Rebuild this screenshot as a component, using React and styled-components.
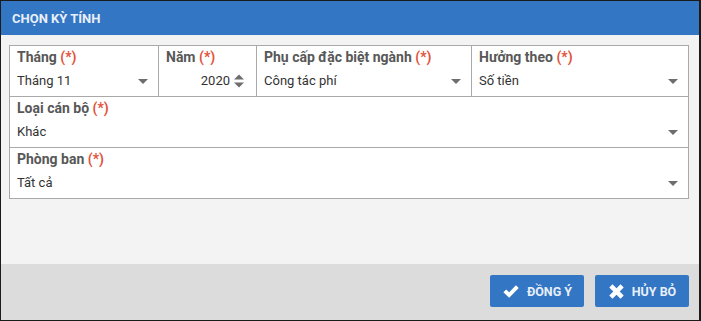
import React from 'react';
import styled, { createGlobalStyle } from 'styled-components';

const GlobalStyle = createGlobalStyle`
  html, body {
    margin: 0;
    padding: 0;
    background: #fff;
  }
  * {
    box-sizing: border-box;
  }
`;

const FIELDS_TOP = [
  { label: 'Tháng', value: 'Tháng 11', width: 149, kind: 'select' },
  { label: 'Năm', value: '2020', width: 98, kind: 'number' },
  { label: 'Phụ cấp đặc biệt ngành', value: 'Công tác phí', width: 215, kind: 'select' },
  { label: 'Hưởng theo', value: 'Số tiền', width: 0, kind: 'select' },
];

const Caret = () => (
  <CaretIcon viewBox="0 0 10 5" width="10" height="5">
    <path d="M0 0 H10 L5 5 Z" fill="#6e6e6e" />
  </CaretIcon>
);

const Spinner = () => (
  <svg viewBox="0 0 10 14" width="10" height="14">
    <path d="M0 5.5 L5 0.5 L10 5.5 Z" fill="#6e6e6e" />
    <path d="M0 8.5 H10 L5 13.5 Z" fill="#6e6e6e" />
  </svg>
);

const Field = ({ label, value, kind, width }) => (
  <Cell $width={width}>
    <Label>
      {label} <Req>(*)</Req>
    </Label>
    <Value $right={kind === 'number'}>
      <span>{value}</span>
      {kind === 'number' ? <Spinner /> : <Caret />}
    </Value>
  </Cell>
);

const CheckIcon = () => (
  <svg viewBox="0 0 16 16" width="18" height="17">
    <path d="M0.8 8.6 L3.5 6 L6.3 8.7 L12.6 2.2 L15.3 4.8 L6.3 13.8 Z" fill="#fff" />
  </svg>
);

const CrossIcon = () => (
  <svg viewBox="0 0 16 16" width="17" height="17">
    <path
      d="M1.2 4.2 L4.2 1.2 L8 5 L11.8 1.2 L14.8 4.2 L11 8 L14.8 11.8 L11.8 14.8 L8 11 L4.2 14.8 L1.2 11.8 L5 8 Z"
      fill="#fff"
    />
  </svg>
);

const App = () => (
  <>
    <GlobalStyle />
    <Dialog>
      <Header>CHỌN KỲ TÍNH</Header>
      <Body>
        <Form>
          <Row>
            {FIELDS_TOP.map((f) => (
              <Field key={f.label} {...f} />
            ))}
          </Row>
          <Row>
            <Field label="Loại cán bộ" value="Khác" kind="select" />
          </Row>
          <Row>
            <Field label="Phòng ban" value="Tất cả" kind="select" />
          </Row>
        </Form>
      </Body>
      <Footer>
        <Button>
          <CheckIcon />
          ĐỒNG Ý
        </Button>
        <Button>
          <CrossIcon />
          HỦY BỎ
        </Button>
      </Footer>
    </Dialog>
  </>
);

const Dialog = styled.div`
  width: 701px;
  height: 321px;
  border: 1px solid #1b1b1b;
  border-right-width: 2px;
  display: flex;
  flex-direction: column;
  font-family: Roboto, 'Liberation Sans', sans-serif;
  background: #f3f3f3;
`;

const Header = styled.div`
  height: 34px;
  flex: none;
  background: #3276c4;
  color: #e9eff8;
  font-size: 13px;
  font-weight: 700;
  display: flex;
  align-items: center;
  padding-left: 11px;
  padding-top: 1px;
`;

const Body = styled.div`
  flex: 1;
  padding: 10px 10px 0 8px;
  background: #f3f3f3;
`;

const Form = styled.div`
  width: 680px;
  border-top: 1px solid #a9a9a9;
  border-left: 1px solid #a9a9a9;
  background: #fff;
`;

const Row = styled.div`
  display: flex;
  height: 51px;
`;

const Cell = styled.div`
  ${({ $width }) => ($width ? `width: ${$width}px; flex: none;` : 'flex: 1;')}
  border-right: 1px solid #a9a9a9;
  border-bottom: 1px solid #a9a9a9;
  padding: 2px 9px 0 7px;
  display: flex;
  flex-direction: column;
`;

const Label = styled.div`
  font-size: 14px;
  font-weight: 700;
  color: #585858;
  line-height: 18px;
`;

const Req = styled.span`
  color: #e2533b;
`;

const Value = styled.div`
  margin-top: 7px;
  display: flex;
  align-items: center;
  justify-content: ${({ $right }) => ($right ? 'flex-end' : 'space-between')};
  gap: 4px;
  font-size: 13px;
  color: #333;
  line-height: 16px;
  padding-right: ${({ $right }) => ($right ? '3px' : '0')};
`;

const CaretIcon = styled.svg`
  margin-right: 1px;
`;

const Footer = styled.div`
  height: 56px;
  flex: none;
  background: #dcdcdc;
  display: flex;
  justify-content: flex-end;
  align-items: flex-start;
  gap: 11px;
  padding: 11px 10px 0 0;
`;

const Button = styled.button`
  height: 32px;
  width: 94px;
  border: none;
  border-radius: 2px;
  background: #3276c4;
  color: #e9eff8;
  font-family: Roboto, 'Liberation Sans', sans-serif;
  font-size: 12.5px;
  font-weight: 700;
  display: flex;
  align-items: center;
  justify-content: center;
  gap: 7px;
  padding: 0 6px;
`;

export default App;
